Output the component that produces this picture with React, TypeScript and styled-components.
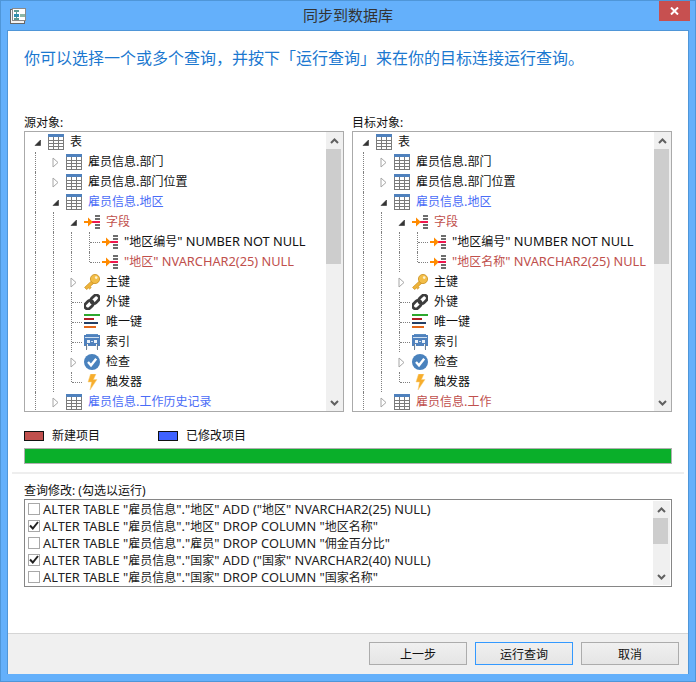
import React from "react";
import styled, { createGlobalStyle } from "styled-components";

const FONT = `"Noto Sans", "Noto Sans CJK SC", sans-serif`;
const BLUE_TEXT = "#4a6cf7";
const RED_TEXT = "#c0504d";

const GlobalStyle = createGlobalStyle`
  * { box-sizing: border-box; }
  html, body { margin: 0; padding: 0; background: #64b0fb; }
  body { font-family: ${FONT}; font-size: 12px; color: #000; }
`;

const Window = styled.div`
  width: 696px;
  height: 682px;
  background: #64b0fb;
  border: 1px solid #4f96d8;
  padding: 0 6px 7px 6px;
  display: flex;
  flex-direction: column;
  overflow: hidden;
`;

const TitleBar = styled.div`
  height: 29px;
  flex: none;
  display: flex;
  align-items: flex-start;
  justify-content: space-between;
`;

const TitleIcon = styled.svg`
  width: 16px;
  height: 16px;
  margin: 7px 0 0 3px;
`;

const Title = styled.div`
  font-size: 15px;
  line-height: 28px;
  color: #333;
  flex: 1;
  text-align: center;
  padding-left: 11px;
`;

const CloseButton = styled.div`
  width: 31px;
  height: 20px;
  margin-right: -1px;
  background: #c75050;
  display: flex;
  align-items: center;
  justify-content: center;
`;

const Content = styled.div`
  flex: 1;
  min-height: 0;
  background: #fff;
  border: 1px solid #4f96d8;
  border-bottom: 0;
  display: flex;
  flex-direction: column;
`;

const Main = styled.div`
  flex: 1;
  padding: 0 16px;
`;

const Intro = styled.div`
  height: 84px;
  padding-top: 15px;
  font-size: 16px;
  line-height: 24px;
  color: #1b78d0;
  white-space: nowrap;
`;

const Columns = styled.div`
  display: grid;
  grid-template-columns: 320px 320px;
  gap: 8px;
`;

const PanelLabel = styled.div`
  height: 16px;
  line-height: 16px;
  font-size: 12px;
  color: #111;
`;

const TreeBox = styled.div`
  height: 281px;
  border: 1px solid #aaa;
  background: #fff;
  display: flex;
  overflow: hidden;
`;

const TreeBody = styled.div`
  flex: 1;
  min-width: 0;
  padding-left: 3px;
  display: flex;
  flex-direction: column;
  overflow: hidden;
`;

const Row = styled.div`
  height: 20px;
  flex: none;
  display: flex;
  align-items: stretch;
  white-space: nowrap;
`;

const RowTail = styled.div`
  flex: 1;
  display: flex;
`;

const Slot = styled.div<{ $kind: SlotKind }>`
  width: 18px;
  flex: none;
  position: relative;
  display: flex;
  align-items: center;
  justify-content: center;

  &::before {
    content: ${(p) => (p.$kind === "none" || p.$kind === "open" || p.$kind === "closed" ? "none" : '""')};
    position: absolute;
    left: 7px;
    top: 0;
    height: ${(p) => (p.$kind === "end" ? "10px" : "100%")};
    border-left: 1px dotted #808080;
  }

  &::after {
    content: ${(p) => (p.$kind === "tee" || p.$kind === "end" ? '""' : "none")};
    position: absolute;
    left: 8px;
    top: 10px;
    width: 10px;
    border-top: 1px dotted #808080;
  }
`;

const NodeIcon = styled.svg`
  width: 16px;
  height: 16px;
  flex: none;
  margin: 2px 6px 0 2px;
`;

const NodeText = styled.span<{ $tone?: Tone }>`
  line-height: 19px;
  font-size: 12px;
  color: ${(p) => (p.$tone === "red" ? RED_TEXT : p.$tone === "blue" ? BLUE_TEXT : "#111")};
`;

const LatinRun = styled.span`
  font-size: 12.8px;
`;

const Scrollbar = styled.div`
  width: 17px;
  flex: none;
  background: #f0f0f0;
  display: flex;
  flex-direction: column;
`;

const ScrollArrow = styled.div`
  height: 17px;
  flex: none;
  display: flex;
  align-items: center;
  justify-content: center;
  padding-right: 1px;
`;

const ScrollTrack = styled.div`
  flex: 1;
  min-height: 0;
`;

const ScrollThumb = styled.div<{ $height: number }>`
  width: 15px;
  height: ${(p) => p.$height}px;
  background: #cdcdcd;
`;

const Legend = styled.div`
  height: 12px;
  margin-top: 18px;
  display: flex;
  align-items: center;
`;

const LegendItem = styled.div`
  width: 134px;
  height: 12px;
  display: flex;
  align-items: center;
  gap: 8px;
  color: #111;
`;

const LegendText = styled.span`
  line-height: 12px;
  margin-top: -1px;
`;

const Swatch = styled.span<{ $color: string }>`
  width: 20px;
  height: 10px;
  background: ${(p) => p.$color};
  border: 1px solid #111;
`;

const Progress = styled.div`
  height: 16px;
  margin-top: 6px;
  background: #0aaf2a;
  border: 1px solid #b0b0b0;
`;

const Divider = styled.div`
  height: 2px;
  margin: 8px -12px 0 -12px;
  background: #eeeeee;
`;

const QueryLabel = styled.div`
  height: 16px;
  margin-top: 9px;
  line-height: 16px;
  color: #111;
`;

const QueryBox = styled.div`
  height: 88px;
  border: 1px solid #868686;
  display: flex;
  overflow: hidden;
`;

const QueryList = styled.div`
  flex: 1;
  padding-left: 3px;
`;

const QueryRow = styled.div`
  height: 17px;
  display: flex;
  align-items: center;
  gap: 3px;
  white-space: nowrap;
  color: #222;
`;

const QueryText = styled.span`
  font-size: 12px;
`;

const CheckBox = styled.span`
  width: 12px;
  height: 12px;
  flex: none;
  border: 1px solid #a8a8a8;
  display: flex;
  align-items: center;
  justify-content: center;
`;

const QueryScrollbar = styled(Scrollbar)`
  margin: 1px 1px 1px 0;
`;

const Footer = styled.div`
  height: 41px;
  flex: none;
  background: #f0f0f0;
  border-top: 1px solid #d5d5d5;
  padding: 8px 9px 0 0;
  display: flex;
  justify-content: flex-end;
  gap: 8px;
`;

const Button = styled.div<{ $focused?: boolean }>`
  width: 98px;
  height: 23px;
  border: 1px solid ${(p) => (p.$focused ? "#3399ff" : "#acacac")};
  background: linear-gradient(#f0f0f0, #e5e5e5);
  display: flex;
  align-items: center;
  justify-content: center;
  color: #111;
`;

type SlotKind = "none" | "line" | "tee" | "end" | "open" | "closed";
type Tone = "red" | "blue";
type IconKind = "table" | "field" | "key" | "link" | "unique" | "index" | "check" | "bolt";

// ascii parts sit a little wider than the cjk parts in this dialog
function MixedText({ text }: { text: string }) {
  return (
    <>
      {text.split(/([\x20-\x7e]+)/).map((part, i) =>
        i % 2 === 1 ? <LatinRun key={i}>{part}</LatinRun> : part
      )}
    </>
  );
}

function Expander({ open }: { open: boolean }) {
  if (open) {
    return (
      <svg width="7" height="7" viewBox="0 0 7 7">
        <path d="M6.5 1 L6.5 6.5 L1 6.5 Z" fill="#333" stroke="#333" strokeWidth="0.6" />
      </svg>
    );
  }
  return (
    <svg width="7" height="11" viewBox="0 0 7 11">
      <path d="M1 1 L6 5.5 L1 10 Z" fill="#fff" stroke="#a6a6a6" strokeWidth="1" />
    </svg>
  );
}

function IconShape({ kind }: { kind: IconKind }) {
  switch (kind) {
    case "table":
      return (
        <g shapeRendering="crispEdges">
          <rect x="0" y="0" width="16" height="16" fill="#fff" />
          <rect x="0" y="0" width="16" height="3" fill="#4f81bd" />
          <path
            d="M0.5 3 V15.5 H15.5 V3 M5.5 3 V15 M10.5 3 V15 M1 6.5 H15 M1 9.5 H15 M1 12.5 H15"
            fill="none"
            stroke="#7b7b7b"
          />
        </g>
      );
    case "field":
      return (
        <g>
          <g shapeRendering="crispEdges">
            <rect x="11" y="1" width="5" height="2" fill="#6d6d6d" />
            <rect x="11" y="4" width="5" height="2" fill="#6d6d6d" />
            <rect x="8" y="7" width="8" height="2" fill="#f0174f" />
            <rect x="11" y="10" width="5" height="2" fill="#6d6d6d" />
            <rect x="11" y="13" width="5" height="2" fill="#6d6d6d" />
            <rect x="0" y="7" width="5" height="2" fill="#ff8a00" />
          </g>
          <path d="M4 3.5 L8.8 8 L4 12.5 Z" fill="#ff8a00" />
        </g>
      );
    case "key":
      return (
        <g>
          <path d="M8 6.5 L0.6 13.4 L2.6 15.6 L4.4 14 L5.6 15 L7.2 13.6 L6.2 12.4 L10.4 8.8 Z" fill="#eeb33a" stroke="#c98f1e" strokeWidth="0.7" />
          <circle cx="11" cy="5" r="4.6" fill="#f2bd47" stroke="#c98f1e" strokeWidth="0.8" />
          <circle cx="12.2" cy="3.6" r="1.3" fill="#fff3cf" />
        </g>
      );
    case "link":
      return (
        <g fill="none" stroke="#3d3d3d" strokeWidth="2.8">
          <rect x="0.2" y="7.6" width="9.6" height="6.2" rx="3.1" transform="rotate(-45 5 10.7)" />
          <rect x="6.2" y="2.2" width="9.6" height="6.2" rx="3.1" transform="rotate(-45 11 5.3)" />
        </g>
      );
    case "unique":
      return (
        <g shapeRendering="crispEdges">
          <rect x="0" y="0" width="16" height="2" fill="#2ea82e" />
          <rect x="0" y="4" width="10" height="2" fill="#b01e23" />
          <rect x="0" y="8" width="14" height="2" fill="#233f66" />
          <rect x="0" y="12" width="12" height="2" fill="#e2661a" />
        </g>
      );
    case "index":
      return (
        <g shapeRendering="crispEdges">
          <rect x="2" y="0" width="12" height="1" fill="#5b8ec4" />
          <rect x="0" y="1" width="16" height="11" fill="#4f81bd" />
          <rect x="1" y="3" width="14" height="1" fill="#cfe0f0" />
          <rect x="3" y="6" width="3" height="3" fill="#eaf1f8" />
          <rect x="10" y="6" width="3" height="3" fill="#eaf1f8" />
          <rect x="7" y="7" width="2" height="1" fill="#cfe0f0" />
          <rect x="2" y="10" width="1" height="6" fill="#6e7f92" />
          <rect x="3" y="10" width="1" height="5" fill="#eef3f8" />
          <rect x="12" y="10" width="1" height="5" fill="#eef3f8" />
          <rect x="13" y="10" width="1" height="6" fill="#6e7f92" />
        </g>
      );
    case "check":
      return (
        <g>
          <circle cx="8" cy="8" r="8" fill="#4a82bd" />
          <path d="M4 8 L7 11.3 L12.2 4.8" fill="none" stroke="#fff" strokeWidth="2.4" />
        </g>
      );
    case "bolt":
      return <path d="M6.5 0 H12 L9.5 5.5 H13 L6 16 L7.5 8 H4 Z" fill="#f7ad2c" stroke="#fbd27c" strokeWidth="0.5" />;
  }
}

function NodeGlyph({ kind }: { kind: IconKind }) {
  return (
    <NodeIcon viewBox="0 0 16 16">
      <IconShape kind={kind} />
    </NodeIcon>
  );
}

function Chevron({ up }: { up: boolean }) {
  return (
    <svg width="9" height="6" viewBox="0 0 9 6">
      <path d={up ? "M1 5 L4.5 1.5 L8 5" : "M1 1 L4.5 4.5 L8 1"} fill="none" stroke="#606060" strokeWidth="2" />
    </svg>
  );
}

interface TreeNode {
  slots: SlotKind[];
  icon: IconKind;
  text: string;
  tone?: Tone;
}

function buildTree(fieldName: string, lastName: string, lastTone: Tone): TreeNode[] {
  return [
    { slots: ["open"], icon: "table", text: "表" },
    { slots: ["line", "closed"], icon: "table", text: "雇员信息.部门" },
    { slots: ["line", "closed"], icon: "table", text: "雇员信息.部门位置" },
    { slots: ["line", "open"], icon: "table", text: "雇员信息.地区", tone: "blue" },
    { slots: ["line", "line", "open"], icon: "field", text: "字段", tone: "red" },
    { slots: ["line", "line", "line", "tee"], icon: "field", text: '"地区编号" NUMBER NOT NULL' },
    { slots: ["line", "line", "line", "end"], icon: "field", text: `"${fieldName}" NVARCHAR2(25) NULL`, tone: "red" },
    { slots: ["line", "line", "closed"], icon: "key", text: "主键" },
    { slots: ["line", "line", "tee"], icon: "link", text: "外键" },
    { slots: ["line", "line", "tee"], icon: "unique", text: "唯一键" },
    { slots: ["line", "line", "tee"], icon: "index", text: "索引" },
    { slots: ["line", "line", "closed"], icon: "check", text: "检查" },
    { slots: ["line", "line", "end"], icon: "bolt", text: "触发器" },
    { slots: ["line", "closed"], icon: "table", text: lastName, tone: lastTone },
  ];
}

function TreePanel({ label, nodes }: { label: string; nodes: TreeNode[] }) {
  return (
    <div>
      <PanelLabel>{label}</PanelLabel>
      <TreeBox>
        <TreeBody>
          {nodes.map((node) => (
            <Row key={node.text + node.slots.length}>
              {node.slots.map((slot, i) => (
                <Slot key={i} $kind={slot}>
                  {slot === "open" && <Expander open />}
                  {slot === "closed" && <Expander open={false} />}
                </Slot>
              ))}
              <NodeGlyph kind={node.icon} />
              <NodeText $tone={node.tone}>
                <MixedText text={node.text} />
              </NodeText>
            </Row>
          ))}
          <RowTail>
            <Slot $kind="line" />
          </RowTail>
        </TreeBody>
        <Scrollbar>
          <ScrollArrow>
            <Chevron up />
          </ScrollArrow>
          <ScrollTrack>
            <ScrollThumb $height={115} />
          </ScrollTrack>
          <ScrollArrow>
            <Chevron up={false} />
          </ScrollArrow>
        </Scrollbar>
      </TreeBox>
    </div>
  );
}

const QUERIES = [
  { checked: false, sql: 'ALTER TABLE "雇员信息"."地区" ADD ("地区" NVARCHAR2(25) NULL)' },
  { checked: true, sql: 'ALTER TABLE "雇员信息"."地区" DROP COLUMN "地区名称"' },
  { checked: false, sql: 'ALTER TABLE "雇员信息"."雇员" DROP COLUMN "佣金百分比"' },
  { checked: true, sql: 'ALTER TABLE "雇员信息"."国家" ADD ("国家" NVARCHAR2(40) NULL)' },
  { checked: false, sql: 'ALTER TABLE "雇员信息"."国家" DROP COLUMN "国家名称"' },
];

export default function App(): JSX.Element {
  return (
    <Window>
      <GlobalStyle />
      <TitleBar>
        <TitleIcon viewBox="0 0 16 16">
          <g shapeRendering="crispEdges">
            <rect x="0.5" y="1.5" width="14" height="14" fill="#f4f4f4" stroke="#666" />
            <rect x="2.5" y="0.5" width="13" height="12" fill="#fff" stroke="#8a8a8a" />
            <rect x="4" y="2" width="5" height="2" fill="#5f9a92" />
            <rect x="6" y="4" width="1" height="7" fill="#5f9a92" />
            <rect x="4" y="6" width="5" height="3" fill="#2f8fb0" />
            <rect x="10" y="6" width="5" height="3" fill="#8cb6a6" />
            <rect x="4" y="10" width="5" height="2" fill="#5f9a92" />
          </g>
        </TitleIcon>
        <Title>同步到数据库</Title>
        <CloseButton>
          <svg width="9" height="8" viewBox="0 0 9 8">
            <path d="M1 0.5 L8 7.5 M8 0.5 L1 7.5" stroke="#fff" strokeWidth="2" />
          </svg>
        </CloseButton>
      </TitleBar>
      <Content>
        <Main>
          <Intro>你可以选择一个或多个查询，并按下「运行查询」来在你的目标连接运行查询。</Intro>
          <Columns>
            <TreePanel label="源对象:" nodes={buildTree("地区", "雇员信息.工作历史记录", "blue")} />
            <TreePanel label="目标对象:" nodes={buildTree("地区名称", "雇员信息.工作", "red")} />
          </Columns>
          <Legend>
            <LegendItem>
              <Swatch $color="#c0504d" />
              <LegendText>新建项目</LegendText>
            </LegendItem>
            <LegendItem>
              <Swatch $color="#3f62ff" />
              <LegendText>已修改项目</LegendText>
            </LegendItem>
          </Legend>
          <Progress />
          <Divider />
          <QueryLabel>查询修改: (勾选以运行)</QueryLabel>
          <QueryBox>
            <QueryList>
              {QUERIES.map((q) => (
                <QueryRow key={q.sql}>
                  <CheckBox>
                    {q.checked && (
                      <svg width="10" height="9" viewBox="0 0 10 9">
                        <path d="M1 4.5 L3.8 7.5 L9 1" fill="none" stroke="#222" strokeWidth="2" />
                      </svg>
                    )}
                  </CheckBox>
                  <QueryText>
                    <MixedText text={q.sql} />
                  </QueryText>
                </QueryRow>
              ))}
            </QueryList>
            <QueryScrollbar>
              <ScrollArrow>
                <Chevron up />
              </ScrollArrow>
              <ScrollTrack>
                <ScrollThumb $height={26} />
              </ScrollTrack>
              <ScrollArrow>
                <Chevron up={false} />
              </ScrollArrow>
            </QueryScrollbar>
          </QueryBox>
        </Main>
        <Footer>
          <Button>上一步</Button>
          <Button $focused>运行查询</Button>
          <Button>取消</Button>
        </Footer>
      </Content>
    </Window>
  );
}
